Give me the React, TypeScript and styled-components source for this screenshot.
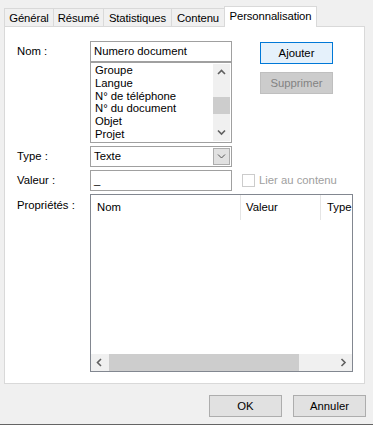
import React from 'react';
import styled, { createGlobalStyle } from 'styled-components';

const GlobalStyle = createGlobalStyle`
  html, body {
    margin: 0;
    padding: 0;
    background: #f0f0f0;
  }
  body {
    font-family: "Liberation Sans", Arial, sans-serif;
    font-size: 11.3px;
    color: #000;
  }
`;

const tabs = [
  { label: 'Général', width: 50 },
  { label: 'Résumé', width: 51 },
  { label: 'Statistiques', width: 69 },
  { label: 'Contenu', width: 54 },
  { label: 'Personnalisation', width: 93, active: true },
];

const champs = ['Groupe', 'Langue', 'N° de téléphone', 'N° du document', 'Objet', 'Projet'];

const Chevron: React.FC<{ dir: 'up' | 'down' | 'left' | 'right'; thin?: boolean }> = ({ dir, thin }) => {
  const pts = {
    up: '1,5 4.5,1.5 8,5',
    down: '1,1.5 4.5,5 8,1.5',
    left: '5,1 1.5,4.5 5,8',
    right: '1.5,1 5,4.5 1.5,8',
  }[dir];
  const vertical = dir === 'up' || dir === 'down';
  return (
    <svg width={vertical ? 9 : 7} height={vertical ? 7 : 9} viewBox={vertical ? '0 0 9 7' : '0 0 7 9'}>
      <polyline points={pts} fill="none" stroke={thin ? '#555' : '#606060'} strokeWidth={thin ? 1 : 1.6} />
    </svg>
  );
};

const Personnalisation: React.FC = () => {
  return (
    <Dialog>
      <GlobalStyle />
      <TabStrip>
        {tabs.map((t) => (
          <Tab key={t.label} active={!!t.active} width={t.width}>
            {t.label}
          </Tab>
        ))}
      </TabStrip>

      <Panel>
        <Row>
          <Label>Nom :</Label>
          <FieldStack>
            <TextBox>Numero document</TextBox>
            <ListBox>
              <ListItems>
                {champs.map((c) => (
                  <ListItem key={c}>{c}</ListItem>
                ))}
              </ListItems>
              <VScroll>
                <ArrowBox>
                  <Chevron dir="up" />
                </ArrowBox>
                <VTrack>
                  <VThumb />
                </VTrack>
                <ArrowBox>
                  <Chevron dir="down" />
                </ArrowBox>
              </VScroll>
            </ListBox>
          </FieldStack>
          <ActionStack>
            <ActionButton primary>Ajouter</ActionButton>
            <ActionButton disabled>Supprimer</ActionButton>
          </ActionStack>
        </Row>

        <Row>
          <Label>Type :</Label>
          <Combo>
            <span>Texte</span>
            <ComboButton>
              <Chevron dir="down" thin />
            </ComboButton>
          </Combo>
        </Row>

        <Row>
          <Label>Valeur :</Label>
          <TextBox>_</TextBox>
          <CheckLabel>
            <CheckBox />
            Lier au contenu
          </CheckLabel>
        </Row>

        <Row>
          <Label top>Propriétés :</Label>
          <ListView>
            <Header>
              <HeaderCell width={150}>Nom</HeaderCell>
              <HeaderCell width={80}>Valeur</HeaderCell>
              <HeaderCell>Type</HeaderCell>
            </Header>
            <ListBody />
            <HScroll>
              <ArrowBox>
                <Chevron dir="left" />
              </ArrowBox>
              <HTrack>
                <HThumb style={{ width: 190 }} />
              </HTrack>
              <ArrowBox>
                <Chevron dir="right" />
              </ArrowBox>
            </HScroll>
          </ListView>
        </Row>
      </Panel>

      <Footer>
        <DialogButton>OK</DialogButton>
        <DialogButton>Annuler</DialogButton>
      </Footer>
    </Dialog>
  );
};

export default Personnalisation;

const Dialog = styled.div`
  width: 373px;
  height: 425px;
  box-sizing: border-box;
  display: flex;
  flex-direction: column;
  background: #f0f0f0;
  border-bottom: 1px solid #646464;
`;

const TabStrip = styled.div`
  display: flex;
  align-items: flex-end;
  height: 20px;
  padding: 6px 0 0 4px;
  position: relative;
  z-index: 1;
`;

const Tab = styled.div<{ active: boolean; width: number }>`
  box-sizing: border-box;
  width: ${({ width }) => width}px;
  height: ${({ active }) => (active ? 21 : 18)}px;
  margin-bottom: ${({ active }) => (active ? -1 : 0)}px;
  margin-left: -1px;
  display: flex;
  align-items: center;
  justify-content: center;
  padding-bottom: ${({ active }) => (active ? 2 : 0)}px;
  border: 1px solid #d9d9d9;
  border-bottom: none;
  background: ${({ active }) => (active ? '#fff' : '#f0f0f0')};
  white-space: nowrap;
  letter-spacing: -0.1px;

  &:first-child {
    margin-left: 0;
  }
`;

const Panel = styled.div`
  box-sizing: border-box;
  height: 358px;
  margin: 0 8px 0 4px;
  padding: 14px 0 0 12px;
  border: 1px solid #d9d9d9;
  background: #fff;
  display: flex;
  flex-direction: column;
  gap: 3px;
`;

const Row = styled.div`
  display: flex;
  align-items: flex-start;
`;

const Label = styled.div<{ top?: boolean }>`
  width: 73px;
  flex-shrink: 0;
  line-height: 21px;
  padding-top: ${({ top }) => (top ? 1 : 0)}px;
`;

const FieldStack = styled.div`
  display: flex;
  flex-direction: column;
  width: 142px;
`;

const TextBox = styled.div`
  box-sizing: border-box;
  width: 142px;
  height: 21px;
  border: 1px solid #a0a0a0;
  padding: 0 3px;
  line-height: 19px;
  background: #fff;
  white-space: nowrap;
  overflow: hidden;
`;

const ListBox = styled.div`
  box-sizing: border-box;
  height: 81px;
  border: 1px solid #a0a0a0;
  padding: 1px;
  display: flex;
`;

const ListItems = styled.div`
  flex: 1;
  padding: 0 0 0 3px;
  line-height: 12.8px;
  overflow: hidden;
`;

const ListItem = styled.div`
  white-space: nowrap;
`;

const VScroll = styled.div`
  width: 17px;
  display: flex;
  flex-direction: column;
  background: #f0f0f0;
`;

const ArrowBox = styled.div`
  width: 17px;
  height: 17px;
  flex-shrink: 0;
  display: flex;
  align-items: center;
  justify-content: center;
`;

const VTrack = styled.div`
  flex: 1;
  padding-top: 16px;
`;

const VThumb = styled.div`
  height: 17px;
  background: #cdcdcd;
`;

const ActionStack = styled.div`
  display: flex;
  flex-direction: column;
  gap: 8px;
  margin: 1px 0 0 28px;
`;

const ActionButton = styled.button<{ primary?: boolean }>`
  box-sizing: border-box;
  width: 73px;
  height: 22px;
  padding: 0;
  font: inherit;
  color: ${({ disabled }) => (disabled ? '#838383' : '#000')};
  background: ${({ primary, disabled }) => (primary ? '#e5f1fb' : disabled ? '#cccccc' : '#e1e1e1')};
  border: 1px solid ${({ primary, disabled }) => (primary ? '#0078d7' : disabled ? '#bfbfbf' : '#adadad')};
`;

const Combo = styled.div`
  box-sizing: border-box;
  width: 142px;
  height: 21px;
  border: 1px solid #a0a0a0;
  display: flex;
  align-items: center;
  justify-content: space-between;
  padding: 0 0 0 3px;
  line-height: 19px;
  background: #fff;
`;

const ComboButton = styled.div`
  box-sizing: border-box;
  width: 17px;
  height: 17px;
  margin-right: 1px;
  background: #e1e1e1;
  border: 1px solid #adadad;
  display: flex;
  align-items: center;
  justify-content: center;
`;

const CheckLabel = styled.div`
  display: flex;
  align-items: center;
  gap: 4px;
  margin: 3px 0 0 10px;
  color: #a0a0a0;
  line-height: 14px;
`;

const CheckBox = styled.span`
  box-sizing: border-box;
  width: 13px;
  height: 13px;
  border: 1px solid #cccccc;
  background: #fff;
`;

const ListView = styled.div`
  box-sizing: border-box;
  width: 263px;
  height: 178px;
  border: 1px solid #828790;
  display: flex;
  flex-direction: column;
  background: #fff;
`;

const Header = styled.div`
  display: flex;
  height: 25px;
  flex-shrink: 0;
  overflow: hidden;
`;

const HeaderCell = styled.div<{ width?: number }>`
  box-sizing: border-box;
  ${({ width }) => (width ? `width: ${width}px; flex-shrink: 0;` : 'flex: 1;')}
  padding-left: ${({ width }) => (width === 80 ? 5 : 6)}px;
  line-height: 25px;
  border-right: ${({ width }) => (width ? '1px solid #e5e5e5' : 'none')};
  white-space: nowrap;
`;

const ListBody = styled.div`
  flex: 1;
`;

const HScroll = styled.div`
  display: flex;
  height: 17px;
  flex-shrink: 0;
  background: #f0f0f0;
`;

const HTrack = styled.div`
  flex: 1;
  padding-left: 1px;
  display: flex;
`;

const HThumb = styled.div`
  height: 17px;
  background: #cdcdcd;
`;

const Footer = styled.div`
  display: flex;
  justify-content: flex-end;
  gap: 11px;
  padding: 11px 7px 0 0;
`;

const DialogButton = styled.button`
  box-sizing: border-box;
  width: 73px;
  height: 22px;
  padding: 0;
  font: inherit;
  color: #000;
  background: #e1e1e1;
  border: 1px solid #adadad;
`;
